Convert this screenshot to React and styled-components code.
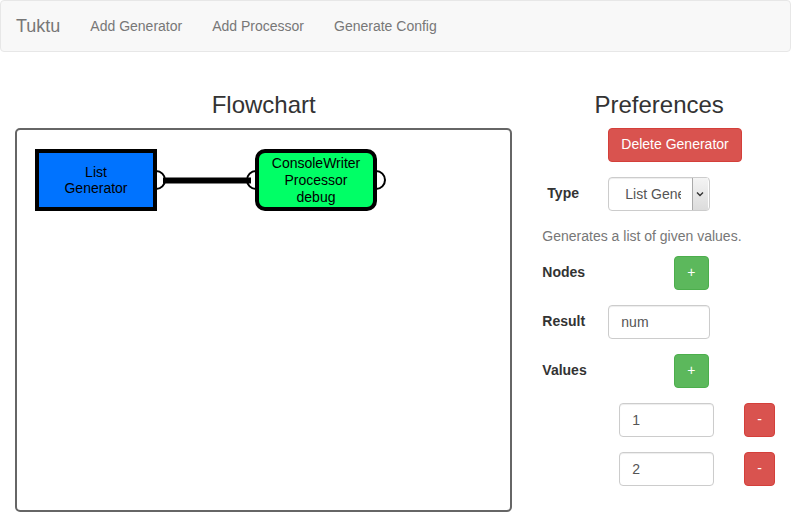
import React from 'react';
import styled, { createGlobalStyle } from 'styled-components';

const GlobalStyle = createGlobalStyle`
  html, body {
    margin: 0;
    padding: 0;
    background: #fff;
  }
  body {
    font-family: "Liberation Sans", Arial, Helvetica, sans-serif;
    font-size: 14px;
    line-height: 1.42857;
    color: #333;
  }
  * {
    box-sizing: border-box;
  }
`;

const nodes = [
  { id: 'gen', left: 18, top: 19, kind: 'generator', lines: ['List', 'Generator'] },
  { id: 'proc', left: 238, top: 19, kind: 'processor', lines: ['ConsoleWriter', 'Processor', 'debug'] },
];

const ports = [
  { id: 'gen-out', x: 139, y: 50 },
  { id: 'proc-in', x: 239, y: 50 },
  { id: 'proc-out', x: 359, y: 50 },
];

export default function App() {
  return (
    <>
      <GlobalStyle />
      <Navbar>
        <Brand>Tuktu</Brand>
        <NavLink>Add Generator</NavLink>
        <NavLink>Add Processor</NavLink>
        <NavLink>Generate Config</NavLink>
      </Navbar>

      <Main>
        <LeftColumn>
          <Heading>Flowchart</Heading>
          <Canvas>
            {ports.map((p) => (
              <Port key={p.id} style={{ left: p.x - 10, top: p.y - 10 }} />
            ))}
            <Wire width="360" height="100">
              <line x1="146" y1="50.5" x2="234" y2="50.5" stroke="#000" strokeWidth="6" />
            </Wire>
            {nodes.map((n) => (
              <Node key={n.id} $kind={n.kind} style={{ left: n.left, top: n.top }}>
                {n.lines.map((l) => (
                  <span key={l}>{l}</span>
                ))}
              </Node>
            ))}
          </Canvas>
        </LeftColumn>

        <RightColumn>
          <Heading>Preferences</Heading>
          <FormRow>
            <span />
            <div>
              <Button $variant="danger">Delete Generator</Button>
            </div>
          </FormRow>

          <FormRow $top={15}>
            <Label $indent={5}>Type</Label>
            <Select>
              <SelectText>List Generator</SelectText>
              <SelectArrow>
                <svg width="8" height="6" viewBox="0 0 8 6">
                  <path d="M1 1.5 L4 4.5 L7 1.5" fill="none" stroke="#333" strokeWidth="1.4" />
                </svg>
              </SelectArrow>
            </Select>
          </FormRow>

          <Description>Generates a list of given values.</Description>

          <FormRow $top={10}>
            <Label>Nodes</Label>
            <Offset $by={66}>
              <Button $variant="success">+</Button>
            </Offset>
          </FormRow>

          <FormRow $top={15}>
            <Label>Result</Label>
            <Input defaultValue="num" $width={102} />
          </FormRow>

          <FormRow $top={15}>
            <Label>Values</Label>
            <Offset $by={66}>
              <Button $variant="success">+</Button>
            </Offset>
          </FormRow>

          {['1', '2'].map((v) => (
            <ValueRow key={v}>
              <Input defaultValue={v} $width={95} />
              <Button $variant="danger">-</Button>
            </ValueRow>
          ))}
        </RightColumn>
      </Main>
    </>
  );
}

const Navbar = styled.nav`
  display: flex;
  align-items: center;
  height: 52px;
  background: #f8f8f8;
  border: 1px solid #e7e7e7;
  border-radius: 4px;
  margin-bottom: 20px;
`;

const Brand = styled.a`
  padding: 15px;
  font-size: 18px;
  line-height: 20px;
  color: #777;
`;

const NavLink = styled.a`
  padding: 15px;
  line-height: 20px;
  color: #777;
`;

const Main = styled.div`
  display: flex;
`;

const LeftColumn = styled.div`
  flex: 0 0 66.6667%;
  padding: 0 15px;
`;

const RightColumn = styled.div`
  flex: 0 0 33.3333%;
  padding: 0 15px;
  display: flex;
  flex-direction: column;
`;

const Heading = styled.h3`
  margin: 20px 0 10px;
  font-size: 24px;
  font-weight: 500;
  line-height: 1.1;
  text-align: center;
  color: #333;
`;

const Canvas = styled.div`
  position: relative;
  height: 384px;
  border: 2px solid #666;
  border-radius: 5px;
  overflow: hidden;
`;

const Port = styled.div`
  position: absolute;
  width: 20px;
  height: 20px;
  border-radius: 50%;
  background: #fff;
  border: 2px solid #000;
`;

const Wire = styled.svg`
  position: absolute;
  left: 0;
  top: 0;
`;

const Node = styled.div`
  position: absolute;
  width: 122px;
  height: 62px;
  border: 4px solid #000;
  border-radius: ${(p) => (p.$kind === 'processor' ? '10px' : '0')};
  background: ${(p) => (p.$kind === 'processor' ? '#00ff66' : '#0073ff')};
  color: #000;
  display: flex;
  flex-direction: column;
  align-items: center;
  justify-content: center;
  line-height: ${(p) => (p.$kind === 'processor' ? '17px' : '16px')};
  font-size: 14px;
`;

const FormRow = styled.div`
  display: grid;
  grid-template-columns: 66px 1fr;
  align-items: center;
  margin-top: ${(p) => p.$top || 0}px;
`;

const Label = styled.span`
  font-weight: bold;
  padding-left: ${(p) => p.$indent || 0}px;
`;

const Offset = styled.div`
  padding-left: ${(p) => p.$by}px;
`;

const Button = styled.button`
  font-family: inherit;
  font-size: 14px;
  line-height: 1.42857;
  height: 34px;
  padding: 6px 12px;
  border-radius: 4px;
  color: #fff;
  cursor: pointer;
  background: ${(p) => (p.$variant === 'danger' ? '#d9534f' : '#5cb85c')};
  border: 1px solid ${(p) => (p.$variant === 'danger' ? '#d43f3a' : '#4cae4c')};
`;

const Select = styled.div`
  display: flex;
  align-items: stretch;
  width: 102px;
  height: 34px;
  border: 1px solid #ccc;
  border-radius: 4px;
  background: #fff;
  box-shadow: inset 0 1px 1px rgba(0, 0, 0, 0.075);
`;

const SelectText = styled.span`
  width: 72px;
  padding-left: 16px;
  margin-right: 11px;
  overflow: hidden;
  white-space: nowrap;
  line-height: 32px;
  color: #555;
`;

const SelectArrow = styled.span`
  width: 17px;
  margin: 0 1px 0 0;
  display: flex;
  align-items: center;
  justify-content: center;
  background: linear-gradient(#f4f4f4, #dcdcdc);
  border-left: 1px solid #aaa;
`;

const Description = styled.p`
  margin: 15px 0 0;
  line-height: 20px;
  color: #777;
`;

const Input = styled.input`
  font-family: inherit;
  font-size: 14px;
  width: ${(p) => p.$width}px;
  height: 34px;
  padding: 6px 12px;
  color: #555;
  background: #fff;
  border: 1px solid #ccc;
  border-radius: 4px;
  box-shadow: inset 0 1px 1px rgba(0, 0, 0, 0.075);
  outline: none;
`;

const ValueRow = styled.div`
  display: flex;
  align-items: center;
  gap: 30px;
  margin-top: 15px;
  padding-left: 77px;
`;
